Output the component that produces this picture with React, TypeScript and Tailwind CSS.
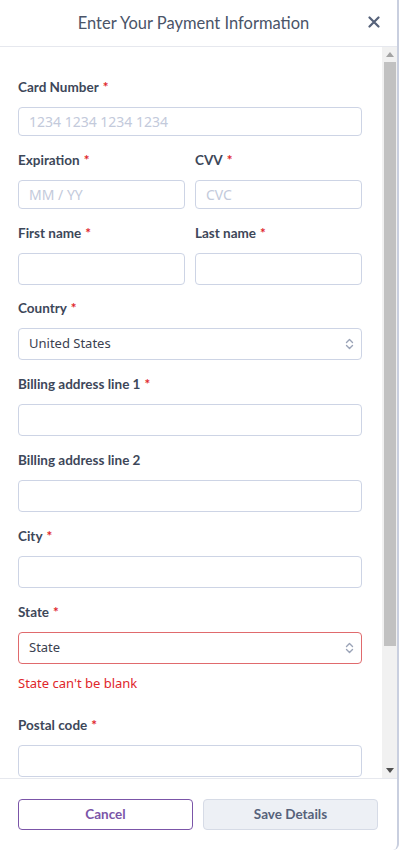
import type { ReactNode } from "react";

const LABEL_FONT = { fontFamily: "Lato, 'Liberation Sans', sans-serif" };
const INPUT_FONT = { fontFamily: "'Noto Sans', 'Open Sans', sans-serif" };

function Label({ children, required }: { children: ReactNode; required?: boolean }) {
  return (
    <div className="h-5 leading-5 text-[13.5px] font-bold text-[#3d4759] mb-[10px]" style={LABEL_FONT}>
      {children}
      {required && <span className="text-[#e0262b] ml-1">*</span>}
    </div>
  );
}

function TextInput({ placeholder, short }: { placeholder?: string; short?: boolean }) {
  return (
    <div
      className={`${short ? "h-[29px]" : "h-[32px]"} w-full rounded-[4px] border border-[#cdd4e5] bg-white px-[10px] flex items-center text-[14px] text-[#c3cadb]`}
      style={INPUT_FONT}
    >
      {placeholder}
    </div>
  );
}

function Chevrons() {
  return (
    <svg width="9" height="12" viewBox="0 0 9 12" fill="none" stroke="#9aa3b7" strokeWidth="1.4" strokeLinecap="round" strokeLinejoin="round">
      <path d="M1.5 4.5 L4.5 1.5 L7.5 4.5" />
      <path d="M1.5 7.5 L4.5 10.5 L7.5 7.5" />
    </svg>
  );
}

function Select({ value, error }: { value: string; error?: boolean }) {
  return (
    <div
      className={`h-[32px] w-full rounded-[4px] border ${error ? "border-[#e06a6d]" : "border-[#cdd4e5]"} bg-white pl-[10px] pr-[7px] flex items-center justify-between text-[13px] text-[#3b4150]`}
      style={INPUT_FONT}
    >
      <span>{value}</span>
      <Chevrons />
    </div>
  );
}

function Field({ label, required, children }: { label: string; required?: boolean; children: ReactNode }) {
  return (
    <div className="mb-[14px] min-w-0">
      <Label required={required}>{label}</Label>
      {children}
    </div>
  );
}

// Scrollbar drawn by hand, the headless browser uses overlay scrollbars
function Scrollbar() {
  return (
    <div className="w-[15px] shrink-0 bg-[#f1f1f1] flex flex-col">
      <div className="h-[15px] flex items-center justify-center">
        <svg width="8" height="5" viewBox="0 0 8 5"><path d="M0 5 L4 0 L8 5 Z" fill="#a3a3a3" /></svg>
      </div>
      <div className="h-[584px] ml-[2px] mr-px bg-[#c1c1c1]" />
      <div className="flex-1" />
      <div className="h-[15px] flex items-center justify-center">
        <svg width="8" height="5" viewBox="0 0 8 5"><path d="M0 0 L8 0 L4 5 Z" fill="#505050" /></svg>
      </div>
    </div>
  );
}

export default function App() {
  return (
    <div className="h-[850px] w-[399px] flex flex-col bg-white border-r-2 border-[#c9cfdf] rounded-br-md overflow-hidden">
      <header className="h-[47px] shrink-0 border-b border-[#e6e8ee] relative flex items-center justify-center">
        <h1 className="text-[16.5px] text-[#4a5468] pr-[10px]" style={LABEL_FONT}>
          Enter Your Payment Information
        </h1>
        <button className="absolute right-[17px] top-[16px] p-0" aria-label="Close">
          <svg width="12" height="12" viewBox="0 0 12 12" stroke="#56627a" strokeWidth="2.2" strokeLinecap="round">
            <path d="M1.5 1.5 L10.5 10.5 M10.5 1.5 L1.5 10.5" />
          </svg>
        </button>
      </header>

      <div className="flex-1 min-h-0 flex">
        <div className="flex-1 min-w-0 overflow-hidden">
          <div className="pt-[30px] pl-[18px] pr-[20px]">
            <Field label="Card Number" required>
              <TextInput short placeholder="1234 1234 1234 1234" />
            </Field>
            <div className="grid grid-cols-2 gap-x-[10px]">
              <Field label="Expiration" required>
                <TextInput short placeholder="MM / YY" />
              </Field>
              <Field label="CVV" required>
                <TextInput short placeholder="CVC" />
              </Field>
              <div className="-mb-px">
                <Field label="First name" required>
                  <TextInput />
                </Field>
              </div>
              <div className="-mb-px">
                <Field label="Last name" required>
                  <TextInput />
                </Field>
              </div>
            </div>
            <Field label="Country" required>
              <Select value="United States" />
            </Field>
            <Field label="Billing address line 1" required>
              <TextInput />
            </Field>
            <Field label="Billing address line 2">
              <TextInput />
            </Field>
            <Field label="City" required>
              <TextInput />
            </Field>
            <div className="mb-[23px]">
              <Label required>State</Label>
              <Select value="State" error />
              <p className="mt-[10px] text-[13px] leading-[18px] text-[#e0262b]" style={INPUT_FONT}>
                State can&apos;t be blank
              </p>
            </div>
            <Field label="Postal code" required>
              <TextInput />
            </Field>
          </div>
        </div>
        <Scrollbar />
      </div>

      <footer className="shrink-0 border-t border-[#e6e8ee] pt-[20px] pb-[20px] pl-[18px] pr-[19px] flex gap-[10px]">
        <div
          className="flex-1 h-[31px] rounded-[4px] border border-[#7b55a8] bg-white flex items-center justify-center text-[13.5px] font-bold text-[#7b55a8]"
          style={LABEL_FONT}
        >
          Cancel
        </div>
        <div
          className="flex-1 h-[31px] rounded-[4px] border border-[#d6dbe6] bg-[#edf0f5] flex items-center justify-center text-[13.5px] font-bold text-[#56627a]"
          style={LABEL_FONT}
        >
          Save Details
        </div>
      </footer>
    </div>
  );
}
